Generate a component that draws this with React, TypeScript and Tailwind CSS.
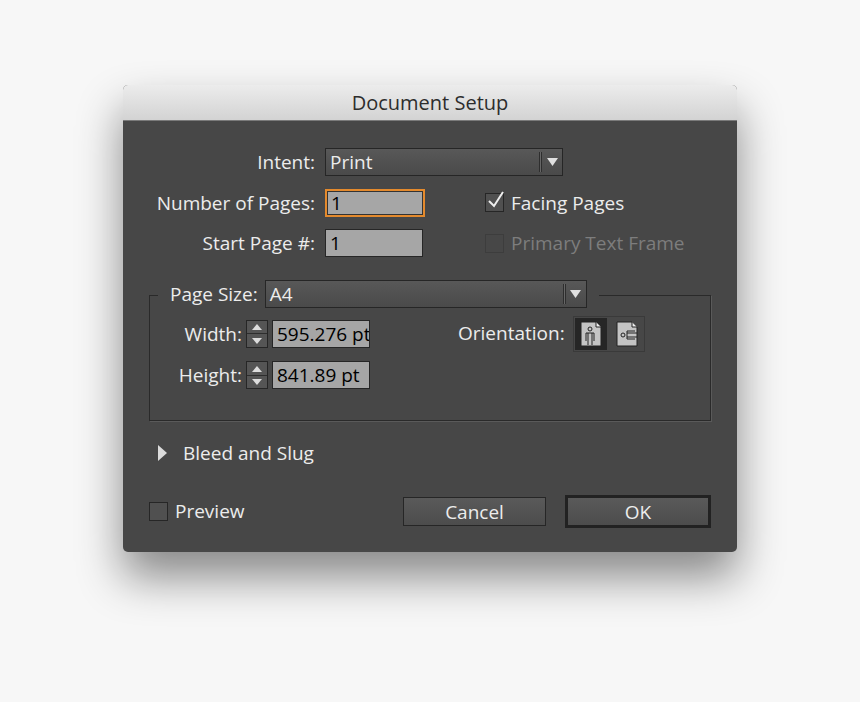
const font = { fontFamily: '"Open Sans", "Liberation Sans", sans-serif' };

function Dropdown({ value, width }: { value: string; width: string }) {
  return (
    <div className={`flex h-[28px] items-center border border-[#262626] bg-gradient-to-b from-[#585858] to-[#4a4a4a] ${width}`}>
      <span className="flex-1 pl-[4px] text-[19px] text-[#ececec]">{value}</span>
      <span className="h-[20px] w-[3px] border-x border-[#2e2e2e] bg-[#666]" />
      <span className="flex w-[20px] justify-center">
        <svg width="11" height="8" viewBox="0 0 11 8"><path d="M0 0h11L5.5 8z" fill="#e0e0e0" /></svg>
      </span>
    </div>
  );
}

function Field({ value, focus, width = "w-[98px]" }: { value: string; focus?: boolean; width?: string }) {
  return (
    <div className={`flex h-[28px] items-center overflow-hidden whitespace-nowrap bg-[#a6a6a6] pl-[4px] text-[19px] text-black ${width} ${focus ? "border-2 border-[#e48a2d] shadow-[inset_0_0_0_1px_#333]" : "border border-[#262626]"}`}>
      {value}
    </div>
  );
}

function Spinner() {
  return (
    <div className="flex h-[28px] w-[22px] flex-col border border-[#262626] bg-[#555]">
      <div className="flex flex-1 items-center justify-center border-b border-[#2e2e2e]">
        <svg width="10" height="6" viewBox="0 0 10 6"><path d="M0 6h10L5 0z" fill="#ddd" /></svg>
      </div>
      <div className="flex flex-1 items-center justify-center">
        <svg width="10" height="6" viewBox="0 0 10 6"><path d="M0 0h10L5 6z" fill="#ddd" /></svg>
      </div>
    </div>
  );
}

function Checkbox({ checked, disabled }: { checked?: boolean; disabled?: boolean }) {
  return (
    <div className={`relative h-[19px] w-[19px] border ${disabled ? "border-[#3d3d3d] bg-[#474747]" : "border-[#262626] bg-[#505050]"}`}>
      {checked && (
        <svg className="absolute -top-[4px] left-[1px]" width="18" height="20" viewBox="0 0 18 20">
          <path d="M2 11l5 5L16 2" stroke="#eee" strokeWidth="2" fill="none" />
        </svg>
      )}
    </div>
  );
}

export default function App() {
  return (
    <div className="min-h-[702px] bg-[#f7f7f7] pt-[85px] pl-[123px]" style={font}>
      <div className="w-[614px] overflow-hidden rounded-[5px] bg-[#474747] shadow-[0_25px_45px_rgba(0,0,0,0.45)]">
        <div className="flex h-[36px] items-center justify-center border-b border-[#7a7a7a] bg-gradient-to-b from-[#ececec] to-[#d3d3d3] text-[20px] font-medium text-[#2d2d2d]">
          Document Setup
        </div>

        <div className="px-[26px] pb-[24px] pt-[27px] text-[19px] font-medium text-[#ececec]">
          <div className="grid grid-cols-[166px_auto] items-center gap-x-[10px] gap-y-[12px] whitespace-nowrap">
            <span className="text-right">Intent:</span>
            <Dropdown value="Print" width="w-[238px]" />
            <span className="text-right">Number of Pages:</span>
            <div className="flex items-center">
              <Field value="1" focus width="w-[100px]" />
              <div className="ml-[60px] flex items-center gap-[7px]">
                <Checkbox checked />
                <span>Facing Pages</span>
              </div>
            </div>
            <span className="text-right">Start Page #:</span>
            <div className="flex items-center">
              <Field value="1" />
              <div className="ml-[62px] flex items-center gap-[7px] text-[#7d7d7d]">
                <Checkbox disabled />
                <span>Primary Text Frame</span>
              </div>
            </div>
          </div>

          <div className="relative mt-[37px] h-[126px] border border-[#2a2a2a] shadow-[1px_1px_0_#5a5a5a]">
            <div className="absolute -top-[16px] left-[8px] flex items-center gap-[7px] bg-[#474747] px-[12px]">
              <span className="whitespace-nowrap">Page Size:</span>
              <Dropdown value="A4" width="w-[322px]" />
            </div>
            <div className="flex pt-[24px]">
              <div className="grid grid-cols-[92px_auto_auto] items-center gap-x-[4px] gap-y-[13px]">
                <span className="text-right">Width:</span>
                <Spinner />
                <Field value="595.276 pt" />
                <span className="text-right">Height:</span>
                <Spinner />
                <Field value="841.89 pt" />
              </div>
              <div className="ml-[88px] flex h-[28px] items-center gap-[8px]">
                <span>Orientation:</span>
                <div className="flex gap-[4px] border border-[#3a3a3a] p-[1px]">
                  <div className="flex h-[32px] w-[32px] items-center justify-center bg-[#262626]">
                    <svg width="22" height="26" viewBox="0 0 22 26">
                      <path d="M1 1h15l5 5v19H1z" fill="#c4c4c4" stroke="#222" />
                      <path d="M16 1v5h5" fill="#eee" stroke="#222" />
                      <circle cx="10" cy="8" r="2" fill="none" stroke="#222" />
                      <path d="M6 20v-8h8v8M8 12v12M12 12v12" fill="none" stroke="#222" />
                    </svg>
                  </div>
                  <div className="flex h-[32px] w-[32px] items-center justify-center bg-[#474747]">
                    <svg width="22" height="26" viewBox="0 0 22 26">
                      <path d="M1 1h15l5 5v19H1z" fill="#c4c4c4" stroke="#222" />
                      <path d="M16 1v5h5" fill="#eee" stroke="#222" />
                      <circle cx="7" cy="14" r="2" fill="none" stroke="#222" />
                      <path d="M19 10h-8v8h8M11 12h10M11 16h10" fill="none" stroke="#222" />
                    </svg>
                  </div>
                </div>
              </div>
            </div>
          </div>

          <div className="mt-[18px] flex items-center gap-[16px] pl-[9px]">
            <svg width="9" height="16" viewBox="0 0 9 16"><path d="M0 0l9 8-9 8z" fill="#dcdcdc" /></svg>
            <span>Bleed and Slug</span>
          </div>

          <div className="mt-[28px] flex items-center">
            <div className="flex items-center gap-[7px]">
              <Checkbox />
              <span>Preview</span>
            </div>
            <div className="ml-auto flex items-center gap-[19px]">
              <button className="h-[29px] w-[143px] border border-[#262626] bg-gradient-to-b from-[#5a5a5a] to-[#4c4c4c] text-[19px] font-medium text-[#ececec]">Cancel</button>
              <button className="h-[33px] w-[146px] border-[3px] border-[#222] bg-gradient-to-b from-[#5a5a5a] to-[#4c4c4c] text-[19px] font-medium text-[#ececec]">OK</button>
            </div>
          </div>
        </div>
      </div>
    </div>
  );
}
